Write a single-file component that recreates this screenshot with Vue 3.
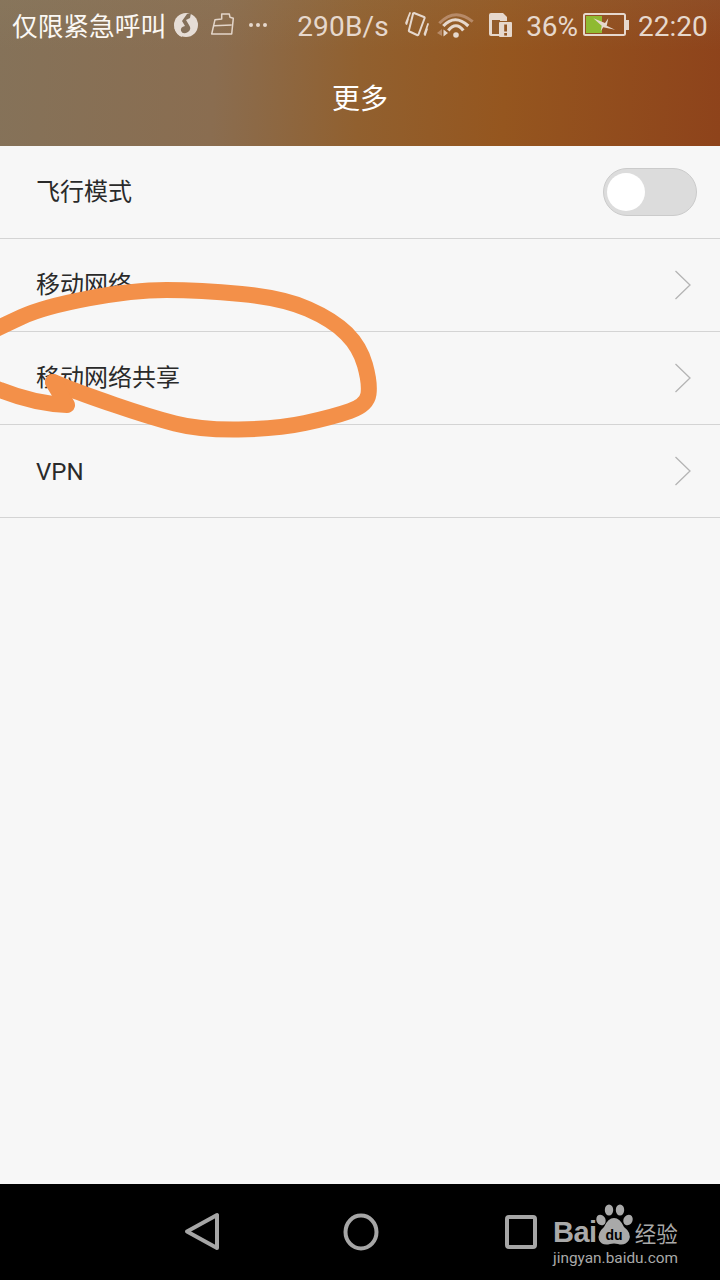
<script setup>
const rows = [
  { label: '移动网络', cjk: true },
  { label: '移动网络共享', cjk: true },
  { label: 'VPN', cjk: false }
]

const mainStroke = [
  [-12, 333], [0, 327], [43, 307], [133, 290], [200, 290], [283, 298], [333, 320], [360, 347],
  [370, 383], [367, 405], [333, 417], [277, 429], [200, 430], [150, 417], [80, 393], [53, 382]
]

function smooth(points) {
  let d = `M${points[0][0]} ${points[0][1]}`
  for (let i = 1; i < points.length - 1; i++) {
    const [x, y] = points[i]
    const [nx, ny] = points[i + 1]
    d += ` Q${x} ${y} ${(x + nx) / 2} ${(y + ny) / 2}`
  }
  const last = points[points.length - 1]
  return `${d} L${last[0]} ${last[1]}`
}

const scribbleMain = smooth(mainStroke)
const scribbleTail = 'M53 382 L67 405 Q35 404 0 390 L-12 386'
</script>

<template>
  <div class="page">
    <header class="header">
      <div class="status">
        <span class="carrier">仅限紧急呼叫</span>
        <svg class="ic-music" width="26" height="26" viewBox="0 0 26 26">
          <circle cx="13" cy="13" r="12" fill="#e6ddd6" />
          <path d="M14 2 L18 1 L17 6 L13 8 L16 13 Q19 17 15 20 Q10 23 8 19 Q7 15 12 14 L9 9 Z" fill="#84705a" />
          <path d="M1 15 Q5 19 8 19 L9 25 Q3 23 1 15 Z" fill="#e6ddd6" />
        </svg>
        <svg class="ic-clip" width="26" height="26" viewBox="0 0 26 26" fill="none" stroke="#e3d5c9" stroke-width="1.500" stroke-linejoin="round">
          <path d="M11.700 2 L19.300 2 L20 5.300 L23.300 6.300 L21.700 22 L1.700 22 L5 7.700 L11.700 7 Z" />
          <path d="M4 13.700 L21.700 13" />
        </svg>
        <span class="dots">
          <i></i><i></i><i></i>
        </span>
        <span class="speed">290B/s</span>
        <svg class="ic-vibrate" width="24" height="28" viewBox="0 0 24 28" fill="none" stroke="#e6d8cd" stroke-linecap="round" stroke-linejoin="round">
          <path d="M9 2 L19 6 Q20 6.500 19.500 7.500 L13.500 23.500 Q13 24.500 12 24 L4.500 20.500 Q3.500 20 4 19 L8 3 Q8 2 9 2 Z" stroke-width="2" />
          <path d="M5 2 L1 12 M3 8 L1.500 13 M23 13 L19.500 23 M22 18 L20 24" stroke-width="1.800" />
        </svg>
        <svg class="ic-wifi" width="38" height="26" viewBox="0 0 38 26" fill="none">
          <path d="M3.300 11.300 Q19 -5 36.700 9.700" stroke="#b78a68" stroke-width="3" />
          <path d="M7.300 14 Q19 1.500 32.300 14" stroke="#e6d8cd" stroke-width="3.200" />
          <path d="M12.300 18.500 Q20 9 27.300 18.500" stroke="#e6d8cd" stroke-width="3.200" />
          <circle cx="20" cy="23" r="2.800" fill="#e6d8cd" />
          <path d="M1 21 L6 17 L6 24 Z" fill="#b78a68" />
          <path d="M7.500 17.500 L12 21 L7.500 24.500 Z" fill="#e6d8cd" />
        </svg>
        <svg class="ic-sim" width="24" height="24" viewBox="0 0 24 24">
          <path d="M1 2 Q1 0 3 0 H15 L19 4 V8 H11 V11 V20 H12 V23 H3 Q1 23 1 21 Z" fill="#e6d8cd" />
          <rect x="4" y="7" width="8" height="14" fill="#935c2c" />
          <rect x="11" y="9" width="13" height="15" rx="1" fill="#e6d8cd" />
          <rect x="16.200" y="11.500" width="2.800" height="7" fill="#935522" />
          <rect x="16.200" y="20" width="2.800" height="2.600" fill="#935522" />
        </svg>
        <span class="percent">36%</span>
        <svg class="ic-battery" width="46" height="24" viewBox="0 0 46 24">
          <rect x="1" y="1" width="41" height="21" rx="1.500" fill="none" stroke="#e6d8cd" stroke-width="2" />
          <rect x="3" y="3" width="16" height="17" fill="#8fba31" />
          <rect x="43" y="7" width="3" height="10" fill="#e6d8cd" />
          <path d="M10.300 5.300 L22 10 L25.300 5.300 L23.700 12.700 L32 16.700 L20.300 14.300 L17.700 18.300 L18.700 12.700 Z" fill="#e6d8cd" />
        </svg>
        <span class="time">22:20</span>
      </div>
      <h1 class="title">更多</h1>
    </header>

    <main class="list">
      <div class="row">
        <span class="label cjk">飞行模式</span>
        <span class="switch"><span class="knob"></span></span>
      </div>
      <div v-for="r in rows" :key="r.label" class="row">
        <span class="label" :class="r.cjk ? 'cjk' : 'latin'">{{ r.label }}</span>
        <svg class="chevron" width="18" height="30" viewBox="0 0 18 30" fill="none" stroke="#b4b4b4" stroke-width="1.300">
          <path d="M1.500 1 L16 15 L1.500 29" />
        </svg>
      </div>
    </main>

    <nav class="nav">
      <svg class="back" width="36" height="40" viewBox="0 0 36 40" fill="none" stroke="#a6a6a6" stroke-width="4" stroke-linejoin="round">
        <path d="M33 3 V36 L3 19.500 Z" />
      </svg>
      <svg class="home" width="36" height="38" viewBox="0 0 36 38" fill="none" stroke="#a6a6a6" stroke-width="4">
        <ellipse cx="18" cy="19" rx="15.500" ry="16.500" />
      </svg>
      <svg class="recent" width="32" height="34" viewBox="0 0 32 34" fill="none" stroke="#a6a6a6" stroke-width="4" stroke-linejoin="round">
        <rect x="2" y="2" width="28" height="30" rx="2" />
      </svg>
    </nav>

    <svg class="scribble" width="400" height="170" viewBox="0 270 400 170" fill="none" stroke="#f39049" stroke-width="16" stroke-linecap="round" stroke-linejoin="round">
      <path :d="scribbleMain" />
      <path :d="scribbleTail" />
    </svg>

    <div class="mark">
      <div class="mark-top">
        <span class="bai">Bai</span>
        <svg class="paw" width="40" height="44" viewBox="0 0 40 44" fill="#a9a9a9">
          <ellipse cx="7" cy="17" rx="4.500" ry="5.500" transform="rotate(-25 7 17)" />
          <ellipse cx="15" cy="7" rx="4.200" ry="5.500" />
          <ellipse cx="26" cy="7" rx="4.200" ry="5.500" />
          <ellipse cx="34" cy="17" rx="4.500" ry="5.500" transform="rotate(25 34 17)" />
          <path d="M20 15 Q26 15 30 24 Q38 30 35 37 Q31 43 24 41 Q20 40 16 41 Q8 43 5 37 Q3 30 10 24 Q14 15 20 15 Z" />
          <text x="20" y="37" text-anchor="middle" class="du">du</text>
        </svg>
        <span class="jy">经验</span>
      </div>
      <div class="mark-url">jingyan.baidu.com</div>
    </div>
  </div>
</template>

<style scoped>
.page {
  position: relative;
  width: 720px;
  height: 1280px;
  overflow: hidden;
  display: flex;
  flex-direction: column;
  background: #f7f7f7;
  font-family: Roboto, "Noto Sans CJK SC", sans-serif;
}
.header {
  height: 146px;
  flex: none;
  background:
    linear-gradient(180deg, rgba(150, 140, 110, 0.12) 0, rgba(0, 0, 0, 0) 50px),
    linear-gradient(93deg, #857259 0%, #8a6d50 30%, #91602f 50%, #95561f 70%, #8e431b 100%);
}
.status {
  height: 50px;
  display: flex;
  align-items: center;
  color: #e6d8cd;
  font-size: 28px;
  line-height: 50px;
  white-space: nowrap;
}
.carrier {
  margin-left: 12px;
  font-size: 25.700px;
  color: #fbf8f4;
  font-family: "Noto Sans CJK SC", sans-serif;
}
.ic-music { margin-left: 7px; flex: none; }
.ic-clip { margin-left: 11px; flex: none; }
.dots { display: flex; gap: 3px; margin-left: 13px; width: 19px; }
.dots i { width: 4px; height: 4px; border-radius: 50%; background: #e6d8cd; }
.speed { margin-left: 29px; width: 92px; margin-top: 3px; letter-spacing: 0.200px; }
.ic-vibrate { margin-left: 16px; flex: none; }
.ic-wifi { margin-left: 7px; flex: none; }
.ic-sim { margin-left: 14px; flex: none; }
.percent { margin-left: 14px; margin-top: 3px; }
.ic-battery { margin-left: 5px; flex: none; }
.time { margin-left: 9px; margin-top: 3px; }
.title {
  margin: 0;
  height: 96px;
  line-height: 94px;
  text-align: center;
  color: #fff;
  font-size: 28px;
  font-weight: 400;
  font-family: "Noto Sans CJK SC", sans-serif;
}
.list { flex: 1; }
.row {
  height: 93px;
  box-sizing: border-box;
  border-bottom: 1px solid #d4d4d4;
  display: flex;
  align-items: center;
  justify-content: space-between;
  padding: 0 23px 0 36px;
}
.label {
  font-size: 24px;
  color: #2a2a2a;
  font-family: Roboto, "Noto Sans CJK SC", sans-serif;
}
.label.cjk { padding-bottom: 5px; }
.label.latin { padding-top: 2px; }
.switch {
  width: 94px;
  height: 48px;
  box-sizing: border-box;
  border: 1px solid #cbcbcb;
  border-radius: 24px;
  background: #dcdcdc;
  display: flex;
  align-items: center;
  padding-left: 3px;
}
.knob {
  width: 38px;
  height: 38px;
  border-radius: 50%;
  background: #fff;
}
.chevron { flex: none; margin-right: 5px; }
.nav {
  height: 96px;
  flex: none;
  background: #000;
  display: flex;
  align-items: center;
  padding-left: 184px;
}
.home { margin-left: 123px; }
.recent { margin-left: 126px; }
.scribble {
  position: absolute;
  left: 0;
  top: 270px;
}
.mark {
  position: absolute;
  left: 553px;
  top: 1203px;
  color: #a9a9a9;
}
.mark-top {
  display: flex;
  align-items: flex-end;
  height: 46px;
}
.bai {
  font-family: "Liberation Sans", sans-serif;
  font-weight: 700;
  font-size: 29px;
  line-height: 34px;
  letter-spacing: -0.500px;
}
.paw { margin-left: -3px; margin-bottom: 2px; flex: none; }
.du {
  font-family: "Liberation Sans", sans-serif;
  font-size: 14px;
  font-weight: 700;
  fill: #000;
}
.jy {
  font-family: "Noto Sans CJK SC", sans-serif;
  font-size: 21.500px;
  line-height: 32px;
  margin-left: 1px;
}
.mark-url {
  font-size: 15.400px;
  line-height: 18px;
  white-space: nowrap;
}
</style>
